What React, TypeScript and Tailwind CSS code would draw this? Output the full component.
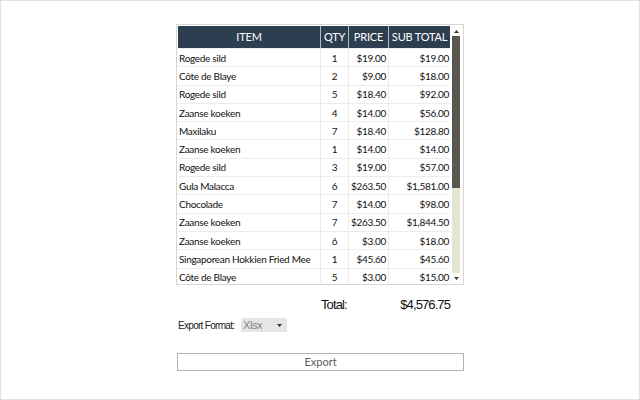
import React from "react";

const rows: [string, number, string, string][] = [
  ["Rogede sild", 1, "$19.00", "$19.00"],
  ["Côte de Blaye", 2, "$9.00", "$18.00"],
  ["Rogede sild", 5, "$18.40", "$92.00"],
  ["Zaanse koeken", 4, "$14.00", "$56.00"],
  ["Maxilaku", 7, "$18.40", "$128.80"],
  ["Zaanse koeken", 1, "$14.00", "$14.00"],
  ["Rogede sild", 3, "$19.00", "$57.00"],
  ["Gula Malacca", 6, "$263.50", "$1,581.00"],
  ["Chocolade", 7, "$14.00", "$98.00"],
  ["Zaanse koeken", 7, "$263.50", "$1,844.50"],
  ["Zaanse koeken", 6, "$3.00", "$18.00"],
  ["Singaporean Hokkien Fried Mee", 1, "$45.60", "$45.60"],
  ["Côte de Blaye", 5, "$3.00", "$15.00"],
];

export default function App() {
  return (
    <div className="w-[640px] h-[400px] border border-[#e2e2e2] bg-white pl-[175px] pt-[23px] overflow-hidden">
      {/* Grid */}
      <div className="w-[288px] h-[261px] border border-[#d6d6d6] p-[1px] flex bg-white">
        <div className="w-[272px] h-full overflow-hidden flex flex-col" style={{ fontFamily: 'Lato, sans-serif' }}>
          <div className="flex h-[22px] bg-[#2c3e50] text-white text-[11px] shrink-0 tracking-[-0.2px]">
            <div className="w-[142px] flex items-center justify-center">ITEM</div>
            <div className="w-[28px] flex items-center justify-center border-l border-[#b3bac2]">QTY</div>
            <div className="w-[40px] flex items-center justify-center border-l border-[#b3bac2]">PRICE</div>
            <div className="w-[62px] flex items-center justify-center border-l border-[#b3bac2]">SUB TOTAL</div>
          </div>
          {rows.map((r, i) => (
            <div key={i} className="flex h-[18.3px] shrink-0 border-t border-[#ececec] text-[10px] tracking-[-0.3px] text-[#111] leading-none">
              <div className="w-[142px] flex items-center pl-[1px] whitespace-nowrap">{r[0]}</div>
              <div className="w-[28px] flex items-center justify-center border-l border-[#ececec]">{r[1]}</div>
              <div className="w-[40px] flex items-center justify-end pr-[2px] border-l border-[#ececec]">{r[2]}</div>
              <div className="w-[62px] flex items-center justify-end pr-[1px] border-l border-[#ececec]">{r[3]}</div>
            </div>
          ))}
        </div>
        {/* scrollbar */}
        <div className="w-[12px] h-full flex flex-col items-center">
          <div className="h-[10px] flex items-center justify-center">
            <svg width="5" height="3" viewBox="0 0 5 3"><path d="M0 3 L2.5 0 L5 3 Z" fill="#333" /></svg>
          </div>
          <div className="w-[8px] flex-1 flex flex-col">
            <div className="h-[152px] bg-[#585850]" />
            <div className="flex-1 bg-[#e3e5d3]" />
          </div>
          <div className="h-[10px] flex items-center justify-center">
            <svg width="5" height="3" viewBox="0 0 5 3"><path d="M0 0 L2.5 3 L5 0 Z" fill="#333" /></svg>
          </div>
        </div>
      </div>

      {/* Total */}
      <div
        className="mt-[12px] h-[16px] w-[274px] flex items-center justify-between text-[13px] text-[#111] tracking-[-0.9px]"
        style={{ fontFamily: '"Liberation Sans", Arial, sans-serif' }}
      >
        <span className="ml-[145px]">Total:</span>
        <span>$4,576.75</span>
      </div>

      {/* Export format */}
      <div className="mt-[5px] h-[14px] flex items-center" style={{ fontFamily: '"Liberation Sans", Arial, sans-serif' }}>
        <span className="ml-[2px] w-[63px] text-[10px] tracking-[-0.7px] text-[#222] whitespace-nowrap">Export Format:</span>
        <div className="w-[46px] h-[14px] bg-[#e6e6e6] flex items-center justify-between pl-[2px] pr-[5px] text-[11px] text-[#808080] tracking-[-0.4px]">
          <span>Xlsx</span>
          <svg width="5" height="3" viewBox="0 0 5 3"><path d="M0 0 L2.5 3 L5 0 Z" fill="#333" /></svg>
        </div>
      </div>

      {/* Export button */}
      <div
        className="mt-[21px] ml-[1px] w-[287px] h-[18px] border border-[#b4b4b4] bg-white flex items-center justify-center text-[11px] text-[#5a5a5a]"
        style={{ fontFamily: 'Lato, sans-serif' }}
      >
        Export
      </div>
    </div>
  );
}
